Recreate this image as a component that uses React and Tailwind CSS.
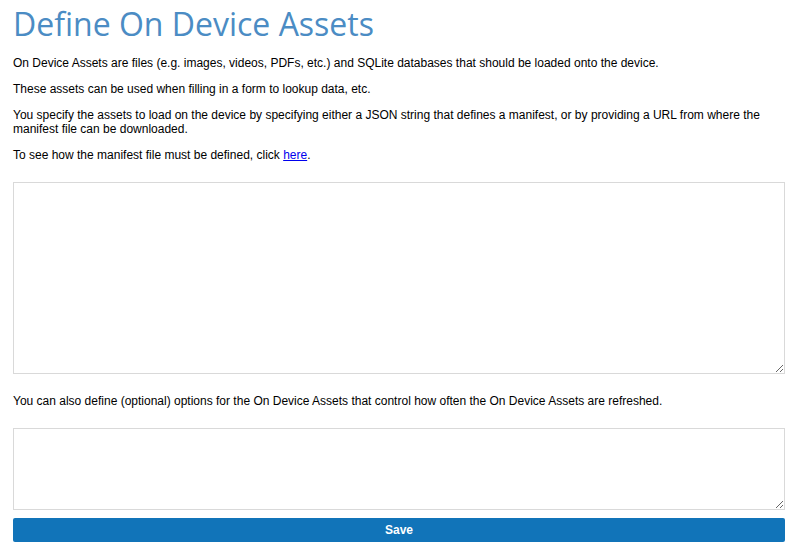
import React from 'react';

export default function App() {
  return (
    <div className="min-h-[555px] bg-white px-[13px] text-[12px] leading-[14px] text-black" style={{ fontFamily: '"Liberation Sans", Arial, sans-serif' }}>
      <h1 className="pt-[4px] text-[32px] leading-[40px] text-[#4b8cc4]" style={{ fontFamily: '"Open Sans", "Noto Sans", sans-serif' }}>
        Define On Device Assets
      </h1>
      <p className="mt-[12px]">
        On Device Assets are files (e.g. images, videos, PDFs, etc.) and SQLite databases that should be loaded onto the device.
      </p>
      <p className="mt-[12px]">These assets can be used when filling in a form to lookup data, etc.</p>
      <p className="mt-[12px]">
        You specify the assets to load on the device by specifying either a JSON string that defines a manifest, or by providing a URL from where the manifest file can be downloaded.
      </p>
      <p className="mt-[12px]">
        To see how the manifest file must be defined, click{' '}
        <a href="#" className="text-[#0000ee] underline">here</a>.
      </p>
      <textarea className="mt-[20px] block h-[192px] w-full border border-[#d9d9d9] p-1 outline-none" />
      <p className="mt-[20px]">
        You can also define (optional) options for the On Device Assets that control how often the On Device Assets are refreshed.
      </p>
      <textarea className="mt-[20px] block h-[82px] w-full border border-[#d9d9d9] p-1 outline-none" />
      <button className="mt-[8px] block h-[24px] w-full rounded-[2px] bg-[#1174b9] text-[12px] font-bold text-white">
        Save
      </button>
    </div>
  );
}
